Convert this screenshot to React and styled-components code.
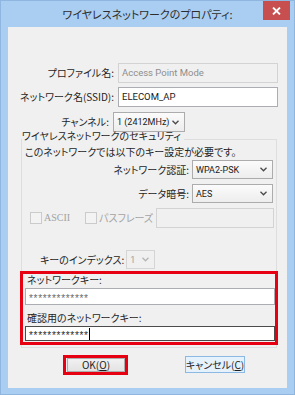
import styled, { createGlobalStyle } from "styled-components";

const GlobalStyle = createGlobalStyle`
  html, body {
    margin: 0;
    padding: 0;
    background: #a9cef1;
  }
  body {
    font-family: "Noto Sans CJK JP", "Noto Sans", sans-serif;
    font-feature-settings: "palt" 1;
  }
`;

const latin = `"Roboto", "Liberation Sans", sans-serif`;

const Window = styled.div`
  width: 295px;
  height: 395px;
  box-sizing: border-box;
  background: #a9cef1;
  border: 1px solid #8fb6de;
  display: flex;
  flex-direction: column;
`;

const TitleBar = styled.div`
  height: 26px;
  display: grid;
  grid-template-columns: 1fr auto 1fr;
  align-items: center;
`;

const Title = styled.div`
  grid-column: 2;
  font-size: 11px;
  color: #2d2d2d;
  line-height: 26px;
`;

const CloseButton = styled.div`
  grid-column: 3;
  justify-self: end;
  align-self: start;
  margin-right: 4px;
  width: 27px;
  height: 19px;
  background: #c84f4f;
  display: flex;
  align-items: center;
  justify-content: center;
`;

const Content = styled.div`
  flex: 1;
  margin: 0 7px 6px;
  background: #f0f0f0;
  padding-top: 36px;
  font-size: 10px;
  line-height: 12px;
  color: #1e1e1e;
`;

const Row = styled.div`
  display: flex;
  align-items: center;
  gap: 4px;
  margin-top: ${(p) => p.$top || 0}px;
`;

const Label = styled.div`
  width: ${(p) => p.$width}px;
  text-align: right;
  white-space: nowrap;
`;

const TextBox = styled.div`
  box-sizing: border-box;
  flex: ${(p) => (p.$width ? "none" : "1")};
  width: ${(p) => (p.$width ? p.$width + "px" : "auto")};
  height: ${(p) => p.$height || 20}px;
  margin-top: ${(p) => p.$top || 0}px;
  margin-left: ${(p) => p.$left || 0}px;
  border: 1px solid ${(p) => (p.$disabled ? "#d3d3d3" : p.$focus ? "#4b4b4b" : "#abadb3")};
  background: ${(p) => (p.$disabled ? "#f0f0f0" : "#fff")};
  color: ${(p) => (p.$disabled ? "#8e8e8e" : "#1a1a1a")};
  font-family: ${latin};
  font-size: 9.5px;
  display: flex;
  align-items: center;
  padding-left: 3px;
  white-space: nowrap;
  overflow: hidden;
`;

const Select = styled.div`
  box-sizing: border-box;
  width: ${(p) => p.$width}px;
  height: ${(p) => p.$height || 20}px;
  border: 1px solid ${(p) => (p.$disabled ? "#d5d5d5" : "#acacac")};
  background: ${(p) =>
    p.$disabled ? "#f0f0f0" : "linear-gradient(#fbfbfb, #ededed)"};
  color: ${(p) => (p.$disabled ? "#a0a0a0" : "#1a1a1a")};
  font-family: ${latin};
  font-size: 9px;
  display: flex;
  align-items: center;
  justify-content: space-between;
  padding: 0 5px 0 3px;
  white-space: nowrap;
  overflow: hidden;
  svg {
    flex-shrink: 0;
  }
`;

const Chevron = ({ color = "#4a4a4a" }) => (
  <svg width="7" height="5" viewBox="0 0 7 5">
    <polyline points="0.5,0.8 3.5,3.8 6.5,0.8" fill="none" stroke={color} strokeWidth="1.3" />
  </svg>
);

const Group = styled.div`
  margin: 7px 10px 0 13px;
  border: 1px solid #dedede;
  padding-bottom: 2px;
`;

const Legend = styled.div`
  width: fit-content;
  margin-top: -10px;
  padding-right: 3px;
  background: #f0f0f0;
  white-space: nowrap;
`;

const Intro = styled.div`
  margin-top: 4px;
  padding-left: 3px;
  white-space: nowrap;
`;

const RightRow = styled.div`
  display: flex;
  align-items: center;
  justify-content: flex-end;
  gap: 3px;
  padding-right: 3px;
  margin-top: ${(p) => p.$top}px;
`;

const CheckRow = styled.div`
  display: flex;
  align-items: center;
  height: 20px;
  margin-top: 5px;
  padding-left: 8px;
`;

const CheckBox = styled.span`
  box-sizing: border-box;
  width: 12px;
  height: 12px;
  border: 1px solid #cbcbcb;
  background: #f3f3f3;
  margin-left: ${(p) => p.$left || 0}px;
`;

const CheckLabel = styled.span`
  width: ${(p) => p.$width}px;
  margin-left: 2px;
  color: #a3a3a3;
  font-family: ${(p) => (p.$latin ? '"Liberation Serif", serif' : "inherit")};
  white-space: nowrap;
`;

const IndexRow = styled.div`
  display: flex;
  align-items: center;
  gap: 2px;
  margin-top: 22px;
  padding-left: 18px;
`;

const KeyBox = styled.div`
  margin: 2px -2px 0 -2px;
  border: 3px solid #e60012;
  padding: 0 0 1px 2px;
`;

const KeyLabel = styled.div`
  padding-left: 2px;
  margin-top: ${(p) => p.$top || 0}px;
`;

const Stars = styled.span`
  font-family: "Liberation Sans", sans-serif;
  font-size: 10px;
  letter-spacing: 0.7px;
  line-height: 10px;
  padding-top: 4px;
  color: ${(p) => (p.$dark ? "#2a2a2a" : "#6a6a6a")};
`;

const Caret = styled.span`
  width: 1px;
  height: 12px;
  background: #000;
`;

const ButtonRow = styled.div`
  display: flex;
  align-items: flex-start;
  margin-top: 7px;
  padding-left: 55px;
  gap: 57px;
`;

const Highlight = styled.div`
  border: 3px solid #e60012;
  padding: 0 0 0 1px;
`;

const Button = styled.div`
  box-sizing: border-box;
  width: ${(p) => p.$width}px;
  height: ${(p) => p.$height}px;
  margin-top: ${(p) => p.$top || 0}px;
  border: 1px solid ${(p) => (p.$hot ? "#8cb8e4" : "#adadad")};
  background: ${(p) => (p.$hot ? "#e5f1fb" : "linear-gradient(#f1f1f1, #e3e3e3)")};
  display: flex;
  align-items: center;
  justify-content: center;
  color: #1e1e1e;
  white-space: nowrap;
`;

export default function App() {
  return (
    <>
      <GlobalStyle />
      <Window>
        <TitleBar>
          <Title>ワイヤレスネットワークのプロパティ:</Title>
          <CloseButton>
            <svg width="9" height="8" viewBox="0 0 9 8">
              <path d="M1 0.5 L8 7.5 M8 0.5 L1 7.5" stroke="#fff" strokeWidth="1.8" />
            </svg>
          </CloseButton>
        </TitleBar>
        <Content>
          <Row>
            <Label $width={106}>プロファイル名:</Label>
            <TextBox $width={160} $disabled>Access Point Mode</TextBox>
          </Row>
          <Row $top={4}>
            <Label $width={106}>ネットワーク名(SSID):</Label>
            <TextBox $width={160}>ELECOM_AP</TextBox>
          </Row>
          <Row $top={5}>
            <Label $width={101}>チャンネル:</Label>
            <Select $width={72}>
              1 (2412MHz)
              <Chevron />
            </Select>
          </Row>
          <Group>
            <Legend>ワイヤレスネットワークのセキュリティ</Legend>
            <Intro>このネットワークでは以下のキー設定が必要です。</Intro>
            <RightRow $top={2}>
              <span>ネットワーク認証:</span>
              <Select $width={81} $height={19}>
                WPA2-PSK
                <Chevron />
              </Select>
            </RightRow>
            <RightRow $top={5}>
              <span>データ暗号:</span>
              <Select $width={81} $height={19}>
                AES
                <Chevron />
              </Select>
            </RightRow>
            <CheckRow>
              <CheckBox />
              <CheckLabel $latin $width={23}>ASCII</CheckLabel>
              <CheckBox $left={18} />
              <CheckLabel $width={46}>パスフレーズ</CheckLabel>
              <TextBox $width={118} $left={11} $disabled />
            </CheckRow>
            <IndexRow>
              <span>キーのインデックス:</span>
              <Select $width={29} $height={19} $disabled>
                1
                <Chevron color="#b5b5b5" />
              </Select>
            </IndexRow>
            <KeyBox>
              <KeyLabel>ネットワークキー:</KeyLabel>
              <TextBox $height={17} $top={2}>
                <Stars>*************</Stars>
              </TextBox>
              <KeyLabel $top={7}>確認用のネットワークキー:</KeyLabel>
              <TextBox $height={15} $top={2} $focus>
                <Stars $dark>*************</Stars>
                <Caret />
              </TextBox>
            </KeyBox>
          </Group>
          <ButtonRow>
            <Highlight>
              <Button $width={58} $height={14}>
                OK(<u>O</u>)
              </Button>
            </Highlight>
            <Button $width={60} $height={17} $top={1} $hot>
              キャンセル(<u>C</u>)
            </Button>
          </ButtonRow>
        </Content>
      </Window>
    </>
  );
}
